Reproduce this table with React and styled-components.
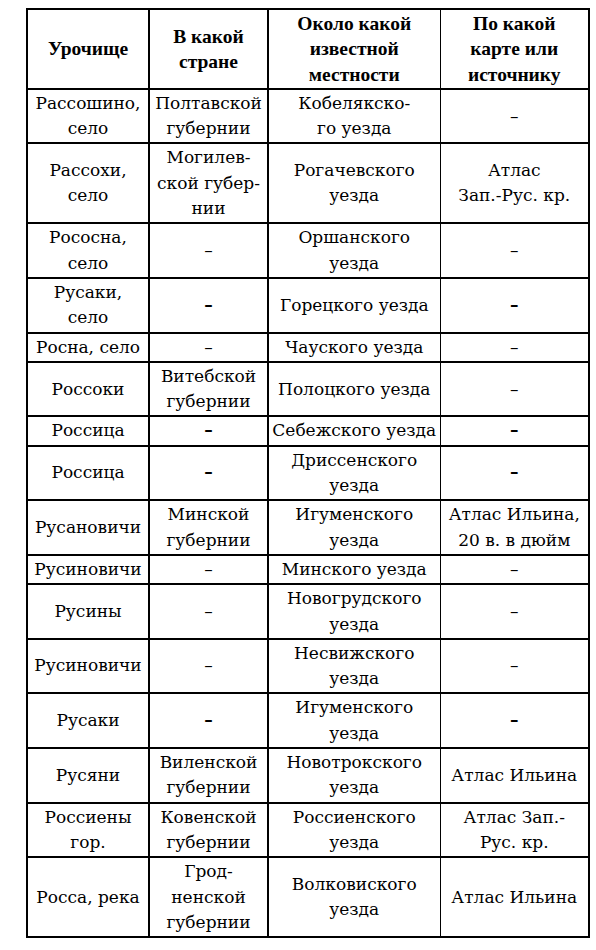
import React from 'react';
import styled, { createGlobalStyle } from 'styled-components';

const GlobalStyle = createGlobalStyle`
  body {
    margin: 0;
    background: #fff;
    font-family: "Liberation Serif", "Times New Roman", serif;
    color: #000;
  }
`;

const Page = styled.div`
  padding: 8px 0 0 26px;
`;

const Table = styled.table`
  border-collapse: collapse;
  table-layout: fixed;
  width: 562px;
  font-family: "Liberation Serif", "Times New Roman", serif;
  font-size: 19.5px;
  line-height: 25.3px;
`;

const HeadCell = styled.th`
  border: 2px solid #000;
  padding: 1px 2px;
  font-weight: bold;
  text-align: center;
  vertical-align: middle;
  ${(p) => p.$thinRight && 'border-right-width: 1px;'}
  ${(p) => p.$thinLeft && 'border-left-width: 1px;'}
`;

const Cell = styled.td`
  border: 2px solid #000;
  padding: 1px 2px;
  font-family: "DejaVu Serif", "Liberation Serif", serif;
  font-size: 17px;
  font-weight: normal;
  text-align: center;
  vertical-align: middle;
  white-space: nowrap;
  ${(p) => p.$thinRight && 'border-right-width: 1px;'}
  ${(p) => p.$thinLeft && 'border-left-width: 1px;'}
`;

const Dash = styled.span`
  font-weight: ${(p) => (p.$bold ? 'bold' : 'normal')};
`;

// "-" thin dash, "=" bold dash
const rows = [
  [['Рассошино,', 'село'], ['Полтавской', 'губернии'], ['Кобелякско-', 'го уезда'], '-'],
  [['Рассохи,', 'село'], ['Могилев-', 'ской губер-', 'нии'], ['Рогачевского', 'уезда'], ['Атлас', 'Зап.-Рус. кр.']],
  [['Рососна,', 'село'], '-', ['Оршанского', 'уезда'], '-'],
  [['Русаки,', 'село'], '=', ['Горецкого уезда'], '='],
  [['Росна, село'], '-', ['Чауского уезда'], '-'],
  [['Россоки'], ['Витебской', 'губернии'], ['Полоцкого уезда'], '-'],
  [['Россица'], '=', ['Себежского уезда'], '='],
  [['Россица'], '=', ['Дриссенского', 'уезда'], '='],
  [['Русановичи'], ['Минской', 'губернии'], ['Игуменского', 'уезда'], ['Атлас Ильина,', '20 в. в дюйм']],
  [['Русиновичи'], '-', ['Минского уезда'], '-'],
  [['Русины'], '-', ['Новогрудского', 'уезда'], '-'],
  [['Русиновичи'], '-', ['Несвижского', 'уезда'], '-'],
  [['Русаки'], '=', ['Игуменского', 'уезда'], '='],
  [['Русяни'], ['Виленской', 'губернии'], ['Новотрокского', 'уезда'], ['Атлас Ильина']],
  [['Россиены', 'гор.'], ['Ковенской', 'губернии'], ['Россиенского', 'уезда'], ['Атлас Зап.-', 'Рус. кр.']],
  [['Росса, река'], ['Грод-', 'ненской', 'губернии'], ['Волковиского', 'уезда'], ['Атлас Ильина']],
];

function Lines({ value }) {
  if (value === '-') return <Dash>–</Dash>;
  if (value === '=') return <Dash $bold>–</Dash>;
  return value.map((line, i) => (
    <React.Fragment key={i}>
      {i > 0 && <br />}
      {line}
    </React.Fragment>
  ));
}

export default function App() {
  return (
    <Page>
      <GlobalStyle />
      <Table>
        <colgroup>
          <col style={{ width: 122 }} />
          <col style={{ width: 119 }} />
          <col style={{ width: 172 }} />
          <col style={{ width: 149 }} />
        </colgroup>
        <thead>
          <tr>
            <HeadCell>Урочище</HeadCell>
            <HeadCell>В какой<br />стране</HeadCell>
            <HeadCell $thinRight>Около какой<br />известной<br />местности</HeadCell>
            <HeadCell $thinLeft>По какой<br />карте или<br />источнику</HeadCell>
          </tr>
        </thead>
        <tbody>
          {rows.map((row, r) => (
            <tr key={r}>
              {row.map((cell, c) => (
                <Cell key={c} $thinRight={c === 2} $thinLeft={c === 3}>
                  <Lines value={cell} />
                </Cell>
              ))}
            </tr>
          ))}
        </tbody>
      </Table>
    </Page>
  );
}
